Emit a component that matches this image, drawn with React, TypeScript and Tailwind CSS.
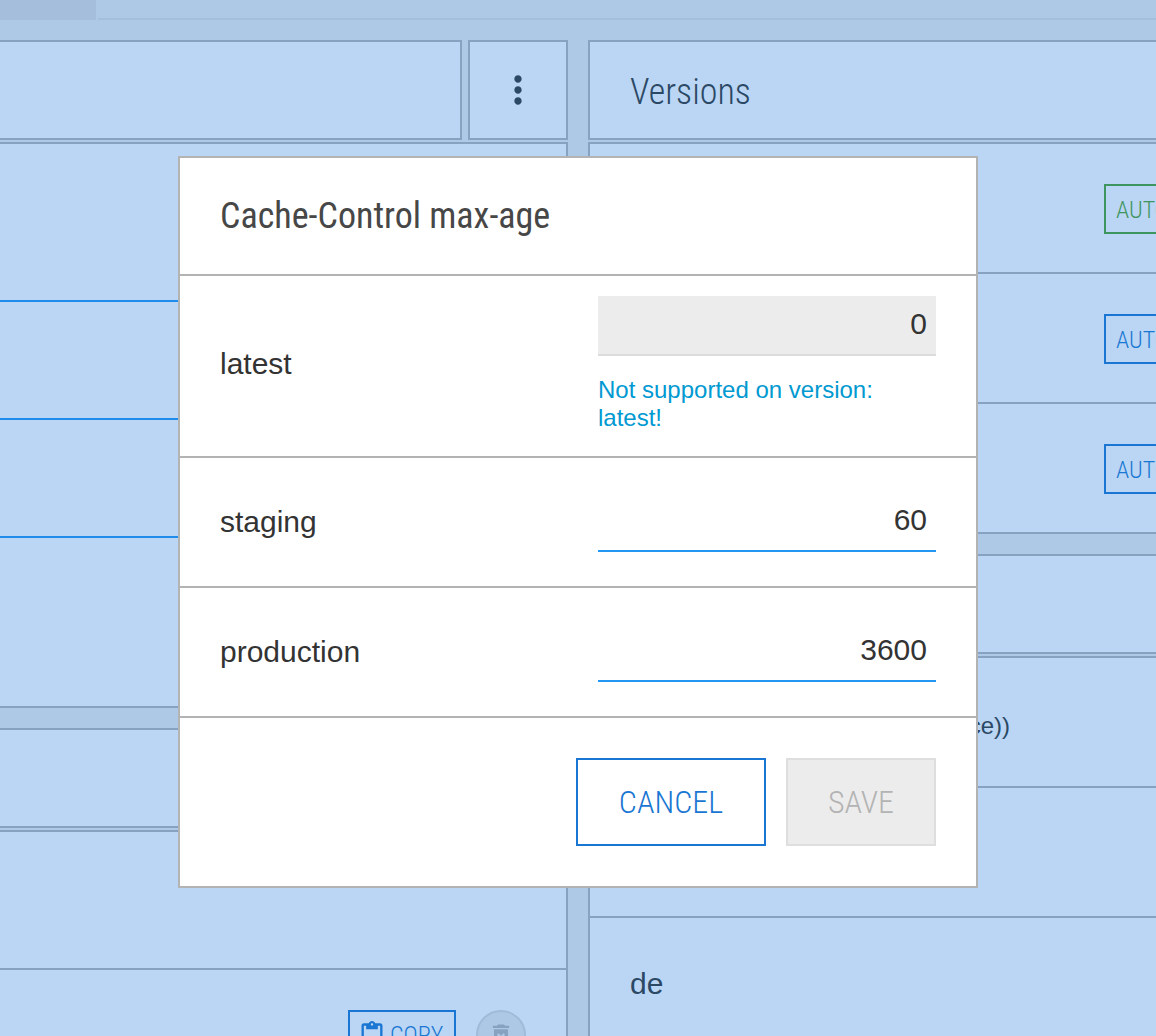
import React from "react";
import { MdContentPaste, MdDeleteForever, MdMoreVert } from "react-icons/md";

const condensed =
  "font-['Roboto_Condensed','Liberation_Sans_Narrow',Roboto,sans-serif]";

function HeaderBar({ children, className = "" }: { children?: React.ReactNode; className?: string }) {
  return (
    <div className={`h-[100px] border-2 border-[#86a2c0] bg-[#bad6f4] flex items-center ${className}`}>
      {children}
    </div>
  );
}

function AutoButton({ tone }: { tone: "green" | "blue" }) {
  const color = tone === "green" ? "border-[#3f9560] text-[#3f9560]" : "border-[#1976d2] text-[#1976d2]";
  return (
    <div className="w-[52px] shrink-0 overflow-hidden">
      <button type="button" className={`block h-[50px] w-max border-2 px-2.5 pt-0.5 text-2xl font-light ${condensed} ${color}`}>
        AUTO
      </button>
    </div>
  );
}

function LeftColumn() {
  return (
    <section className="min-w-0">
      <div className="flex gap-1.5">
        <HeaderBar className="flex-1 border-l-0" />
        <button
          type="button"
          aria-label="More actions"
          className="flex h-[100px] w-[100px] items-center justify-center border-2 border-[#86a2c0] bg-[#bad6f4] text-[#2b4865]"
        >
          <MdMoreVert size={44} />
        </button>
      </div>
      <div className="mt-0.5 border-2 border-l-0 border-[#86a2c0] bg-[#bad6f4]">
        <div className="h-[158px] border-b-2 border-[#1f8cec]" />
        <div className="h-[118px] border-b-2 border-[#1f8cec]" />
        <div className="h-[118px] border-b-2 border-[#1f8cec]" />
        <div className="h-[168px]" />
      </div>
      <HeaderBar className="mt-5 border-l-0" />
      <div className="mt-0.5 border-2 border-l-0 border-[#86a2c0] bg-[#bad6f4]">
        <div className="h-[138px] border-b-2 border-[#86a2c0]" />
        <div className="flex justify-end gap-5 p-10">
          <button
            type="button"
            className={`flex h-[50px] w-[108px] items-center gap-1 border-2 border-[#1976d2] pl-2 text-2xl font-light text-[#1976d2] ${condensed}`}
          >
            <MdContentPaste size={28} className="shrink-0" />
            COPY
          </button>
          <button
            type="button"
            aria-label="Delete"
            disabled
            className="flex size-[50px] items-center justify-center rounded-full border-2 border-[#a0bbd9] bg-[#adc8e5] text-[#86a2c0]"
          >
            <MdDeleteForever size={28} />
          </button>
        </div>
      </div>
    </section>
  );
}

function RightColumn() {
  return (
    <section className="min-w-0">
      <HeaderBar className="border-r-0 px-10 pt-1">
        <h2 className={`text-4xl font-light text-[#2b4865] ${condensed}`}>Versions</h2>
      </HeaderBar>
      <ul className="mt-0.5 border-2 border-r-0 border-b-0 border-[#86a2c0] bg-[#bad6f4]">
        {(["green", "blue", "blue"] as const).map((tone, i) => (
          <li key={i} className="flex h-[130px] items-center justify-end border-b-2 border-[#86a2c0] pt-0.5">
            <AutoButton tone={tone} />
          </li>
        ))}
      </ul>
      <HeaderBar className="mt-5 border-r-0" />
      <ul className="mt-0.5 border-2 border-r-0 border-[#86a2c0] bg-[#bad6f4] text-[#2b4865]">
        <li className="flex h-[130px] items-center border-b-2 border-[#86a2c0] px-10 pt-2 text-2xl">
          <span className="w-[380px] text-right">en (fallback(source))</span>
        </li>
        <li className="h-[130px] border-b-2 border-[#86a2c0]" />
        <li className="flex h-[130px] items-center border-b-2 border-[#86a2c0] px-10 pt-0.5 text-[30px]">de</li>
      </ul>
    </section>
  );
}

function AgeRow({ name, value, disabled = false, note }: { name: string; value: string; disabled?: boolean; note?: string }) {
  return (
    <div className={`grid grid-cols-2 items-center gap-10 border-b-2 border-[#b3b3b3] px-10 ${note ? "pt-5 pb-6" : "py-[34px]"}`}>
      <label htmlFor={name} className="text-[30px] leading-9">
        {name}
      </label>
      <div>
        <input
          id={name}
          defaultValue={value}
          disabled={disabled}
          className={`block h-[60px] w-full border-b-2 px-[9px] pb-0.5 text-right text-[30px] outline-none ${
            disabled ? "border-[#dcdcdc] bg-[#ececec]" : "border-[#2196f3] bg-white"
          }`}
        />
        {note && <p className="mt-5 text-2xl leading-7 text-[#0099d1]">{note}</p>}
      </div>
    </div>
  );
}

export default function App() {
  return (
    <div className="h-screen overflow-hidden bg-[#aec9e5] font-['Liberation_Sans',Arial,sans-serif]">
      <div className="flex h-5 gap-0.5">
        <div className="w-24 bg-[#a4bedb]" />
        <div className="flex-1 border-b-2 border-[#a4bedb]" />
      </div>
      <main className="mt-5 grid grid-cols-2 gap-5">
        <LeftColumn />
        <RightColumn />
      </main>
      <div className="fixed inset-0 flex items-center justify-center pt-2">
        <form
          role="dialog"
          aria-labelledby="dialog-title"
          className="w-full max-w-[800px] border-2 border-[#b3b3b3] bg-white text-[#333333]"
        >
          <header className="border-b-2 border-[#b3b3b3] px-10 py-[34px]">
            <h1 id="dialog-title" className={`text-4xl leading-[48px] text-[#474747] ${condensed}`}>
              Cache-Control max-age
            </h1>
          </header>
          <AgeRow name="latest" value="0" disabled note="Not supported on version: latest!" />
          <AgeRow name="staging" value="60" />
          <AgeRow name="production" value="3600" />
          <footer className={`flex justify-end gap-5 p-10 text-[32px] font-light ${condensed}`}>
            <button type="button" className="h-[88px] w-[190px] border-2 border-[#1976d2] text-[#1976d2]">
              CANCEL
            </button>
            <button type="submit" disabled className="h-[88px] w-[150px] border-2 border-[#dedede] bg-[#ececec] text-[#b3b3b3]">
              SAVE
            </button>
          </footer>
        </form>
      </div>
    </div>
  );
}
